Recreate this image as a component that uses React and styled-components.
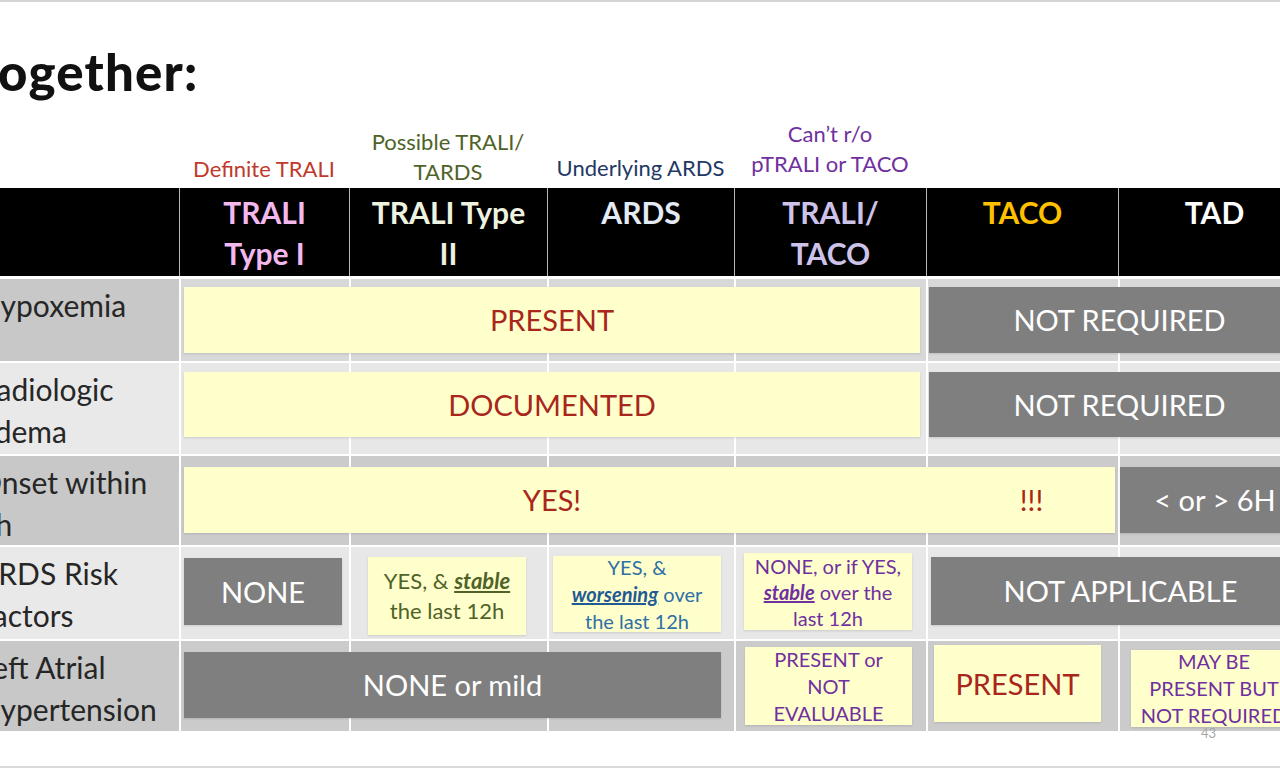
import React from "react";
import styled, { createGlobalStyle } from "styled-components";

const Global = createGlobalStyle`
  html, body { margin: 0; padding: 0; background: #fff; overflow: hidden; }
  body { font-family: Lato, "Liberation Sans", sans-serif; }
`;

const COLS = "209px 170px 198px 187px 192px 192px 192px";

const Slide = styled.div`
  width: 1280px;
  height: 768px;
  box-sizing: border-box;
  border-top: 2px solid #d4d4d4;
  border-bottom: 2px solid #d9d9d9;
  overflow: hidden;
  display: flex;
  flex-direction: column;
`;

const TitleBar = styled.div`
  height: 115px;
  box-sizing: border-box;
  padding-top: 40px;
  margin-left: -2px;
`;

const Title = styled.h1`
  margin: 0;
  font-family: Lato, "DejaVu Sans", sans-serif;
  font-weight: 900;
  font-size: 51px;
  line-height: 60px;
  color: #111;
  letter-spacing: 1.2px;
`;

const Table = styled.div`
  margin-left: -30px;
  width: 1340px;
  display: flex;
  flex-direction: column;
`;

const CaptionRow = styled.div`
  display: grid;
  grid-template-columns: ${COLS};
  height: 71px;
`;

const Caption = styled.div`
  grid-column: ${(p) => p.$col};
  align-self: end;
  padding-bottom: ${(p) => p.$pb}px;
  text-align: center;
  font-size: 22px;
  line-height: 30px;
  color: ${(p) => p.$color};
  white-space: nowrap;
`;

const HeaderRow = styled.div`
  display: grid;
  grid-template-columns: ${COLS};
  height: 88px;
  background: #000;
`;

const HeadCell = styled.div`
  border-left: ${(p) => (p.$first ? "none" : "1px solid #b8b8b8")};
  padding-top: 4px;
  text-align: center;
  font-weight: 700;
  font-size: 30px;
  line-height: 41px;
  color: ${(p) => p.$color || "#fff"};
  white-space: nowrap;
`;

const BodyRow = styled.div`
  display: grid;
  grid-template-columns: ${COLS};
  grid-template-rows: ${(p) => p.$h}px;
  margin-top: ${(p) => p.$gap}px;
`;

const Label = styled.div`
  grid-row: 1;
  grid-column: 1;
  background: ${(p) => p.$bg};
  padding: 5px 0 0 8px;
  font-size: 30px;
  line-height: 42px;
  color: #262626;
  white-space: nowrap;
`;

const BgCell = styled.div`
  grid-row: 1;
  grid-column: ${(p) => p.$col};
  background: ${(p) => p.$bg};
  border-left: 2px solid #fff;
`;

const Box = styled.div`
  grid-row: 1;
  grid-column: ${(p) => p.$col};
  align-self: start;
  margin: ${(p) => p.$mt}px ${(p) => p.$mr || 0}px 0 ${(p) => p.$ml}px;
  height: ${(p) => p.$h}px;
  background: ${(p) => (p.$tone === "gray" ? "#7f7f7f" : "#ffffcc")};
  box-shadow: 0 1px 2px rgba(0, 0, 0, 0.12);
  display: flex;
  align-items: center;
  justify-content: center;
  text-align: center;
  position: relative;
  z-index: 1;
`;

const BigText = styled.span`
  font-size: 29px;
  line-height: 34px;
  color: ${(p) => p.$color};
  white-space: nowrap;
`;

const SmallText = styled.div`
  font-size: ${(p) => p.$size || 20}px;
  line-height: ${(p) => p.$lh || 27}px;
  color: ${(p) => p.$color};
  white-space: nowrap;
`;

const Em = styled.span`
  font-weight: 700;
  font-style: italic;
  text-decoration: underline;
  color: ${(p) => p.$color || "inherit"};
`;

const SplitBox = styled.div`
  display: grid;
  grid-template-columns: 736px 1fr;
  width: 100%;
  align-items: center;
`;

const SplitPart = styled.div`
  text-align: center;
  padding-left: ${(p) => p.$pl || 0}px;
`;

const Footer = styled.div`
  display: flex;
  justify-content: flex-end;
  padding-right: 64px;
  margin-top: -5px;
  font-size: 13px;
  line-height: 14px;
  color: #a6a6a6;
  position: relative;
  z-index: 2;
`;

const RED = "#a8261b";
const PURPLE = "#7030a0";
const ODD = "#cbcbcb";
const EVEN = "#e7e7e7";

function Cells({ bg }) {
  return [2, 3, 4, 5, 6, 7].map((c) => <BgCell key={c} $col={c} $bg={bg} />);
}

export default function App() {
  return (
    <>
      <Global />
      <Slide>
        <TitleBar>
          <Title>ogether:</Title>
        </TitleBar>
        <Table>
          <CaptionRow>
            <Caption $col={2} $pb={4} $color="#c0392b">Definite TRALI</Caption>
            <Caption $col={3} $pb={1} $color="#4f6228">
              Possible TRALI/
              <br />
              TARDS
            </Caption>
            <Caption $col={4} $pb={5} $color="#1f3864">Underlying ARDS</Caption>
            <Caption $col={5} $pb={9} $color="#7030a0">
              Can’t r/o
              <br />
              pTRALI or TACO
            </Caption>
          </CaptionRow>

          <HeaderRow>
            <HeadCell $first />
            <HeadCell $color="#f3b9ef">
              TRALI
              <br />
              Type I
            </HeadCell>
            <HeadCell $color="#eef3e0">
              TRALI Type
              <br />
              II
            </HeadCell>
            <HeadCell $color="#e4ebf4">ARDS</HeadCell>
            <HeadCell $color="#cdc3ea">
              TRALI/
              <br />
              TACO
            </HeadCell>
            <HeadCell $color="#ffc000">TACO</HeadCell>
            <HeadCell>TAD</HeadCell>
          </HeaderRow>

          <BodyRow $h={82} $gap={3}>
            <Label $bg="#c8c8c8">Hypoxemia</Label>
            <Cells bg="#d8d8d8" />
            <Box $col="2 / 6" $ml={5} $mr={6} $mt={8} $h={66} $tone="yellow">
              <BigText $color={RED}>PRESENT</BigText>
            </Box>
            <Box $col="6 / 8" $ml={3} $mt={8} $h={66} $tone="gray">
              <BigText $color="#fff">NOT REQUIRED</BigText>
            </Box>
          </BodyRow>

          <BodyRow $h={91} $gap={2}>
            <Label $bg="#e9e9e9">
              Radiologic
              <br />
              Edema
            </Label>
            <Cells bg={EVEN} />
            <Box $col="2 / 6" $ml={5} $mr={6} $mt={9} $h={65} $tone="yellow">
              <BigText $color={RED}>DOCUMENTED</BigText>
            </Box>
            <Box $col="6 / 8" $ml={3} $mt={9} $h={65} $tone="gray">
              <BigText $color="#fff">NOT REQUIRED</BigText>
            </Box>
          </BodyRow>

          <BodyRow $h={89} $gap={2}>
            <Label $bg="#c8c8c8">
              Onset within
              <br />
              6h
            </Label>
            <Cells bg={ODD} />
            <Box $col="2 / 7" $ml={5} $mr={3} $mt={11} $h={66} $tone="yellow">
              <SplitBox>
                <SplitPart>
                  <BigText $color={RED}>YES!</BigText>
                </SplitPart>
                <SplitPart $pl={28}>
                  <BigText $color={RED}>!!!</BigText>
                </SplitPart>
              </SplitBox>
            </Box>
            <Box $col="7 / 8" $ml={2} $mt={11} $h={66} $tone="gray">
              <BigText $color="#fff">&lt; or &gt; 6H</BigText>
            </Box>
          </BodyRow>

          <BodyRow $h={92} $gap={2}>
            <Label $bg="#e9e9e9">
              ARDS Risk
              <br />
              Factors
            </Label>
            <Cells bg={EVEN} />
            <Box $col="2 / 3" $ml={5} $mr={7} $mt={11} $h={67} $tone="gray">
              <BigText $color="#fff">NONE</BigText>
            </Box>
            <Box $col="3 / 4" $ml={19} $mr={21} $mt={10} $h={78} $tone="yellow">
              <SmallText $color="#4f6228" $size={22} $lh={30}>
                YES, &amp; <Em>stable</Em>
                <br />
                the last 12h
              </SmallText>
            </Box>
            <Box $col="4 / 5" $ml={6} $mr={13} $mt={9} $h={76} $tone="yellow">
              <SmallText $color="#2e6fa6">
                YES, &amp;
                <br />
                <Em $color="#1f5a94">worsening</Em> over
                <br />
                the last 12h
              </SmallText>
            </Box>
            <Box $col="5 / 6" $ml={10} $mr={14} $mt={6} $h={77} $tone="yellow">
              <SmallText $color={PURPLE} $lh={26}>
                NONE, or if YES,
                <br />
                <Em>stable</Em> over the
                <br />
                last 12h
              </SmallText>
            </Box>
            <Box $col="6 / 8" $ml={5} $mt={10} $h={68} $tone="gray">
              <BigText $color="#fff">NOT APPLICABLE</BigText>
            </Box>
          </BodyRow>

          <BodyRow $h={90} $gap={2}>
            <Label $bg="#c8c8c8">
              Left Atrial
              <br />
              Hypertension
            </Label>
            <Cells bg={ODD} />
            <Box $col="2 / 5" $ml={5} $mr={13} $mt={11} $h={66} $tone="gray">
              <BigText $color="#fff">NONE or mild</BigText>
            </Box>
            <Box $col="5 / 6" $ml={11} $mr={14} $mt={6} $h={78} $tone="yellow">
              <SmallText $color={PURPLE}>
                PRESENT or
                <br />
                NOT
                <br />
                EVALUABLE
              </SmallText>
            </Box>
            <Box $col="6 / 7" $ml={8} $mr={17} $mt={4} $h={77} $tone="yellow">
              <BigText $color={RED}>PRESENT</BigText>
            </Box>
            <Box $col="7 / 8" $ml={13} $mr={13} $mt={9} $h={77} $tone="yellow">
              <SmallText $color={PURPLE}>
                MAY BE
                <br />
                PRESENT BUT
                <br />
                NOT REQUIRED
              </SmallText>
            </Box>
          </BodyRow>
        </Table>
        <Footer>43</Footer>
      </Slide>
    </>
  );
}
